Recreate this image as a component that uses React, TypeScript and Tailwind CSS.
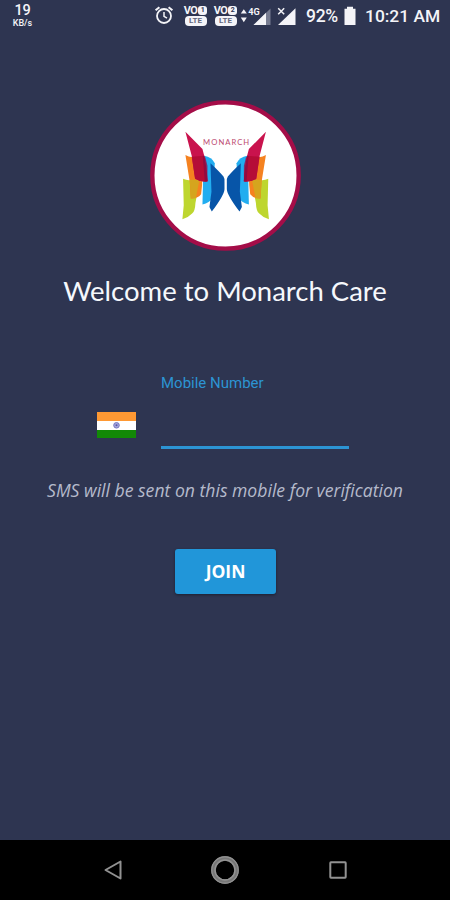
import React from "react";

function AlarmIcon() {
  return (
    <svg viewBox="0 0 20 20" className="h-5 w-5" fill="none" stroke="#f4f4f8" strokeWidth="1.8">
      <circle cx="10" cy="11" r="7" />
      <path d="M10 7v4.4l3 1.8" strokeWidth="1.5" />
      <path d="M1.6 5.3 5.4 2.2M18.4 5.3l-3.8-3.1" strokeWidth="2" />
    </svg>
  );
}

function VolteBadge({ sim }: { sim: string }) {
  return (
    <div className="flex w-[25px] flex-col items-center">
      <div className="flex h-[9px] items-center text-[11px] leading-[9px] font-bold tracking-[-0.6px]">
        VO
        <span className="ml-px flex h-[9px] w-[9px] items-center justify-center rounded-[3px] bg-[#f4f4f8] text-[7px] leading-none tracking-normal text-[#2e3551]">
          {sim}
        </span>
      </div>
      <span className="mt-px flex h-[10px] w-[22px] items-center justify-center rounded-[4px] bg-[#f4f4f8] text-[8px] leading-none font-bold text-[#62677d]">
        LTE
      </span>
    </div>
  );
}

function DataSignal() {
  return (
    <svg viewBox="0 0 32 20" className="h-5 w-8" fill="#f4f4f8">
      <path d="M0.8 7.5 3.8 3.3 6.8 7.5zM0.8 11.5h6L3.8 16.3z" />
      <path d="M13.5 19 30.5 2.5V19z" fill="#777c91" />
      <path d="M13.5 19 26 6.8V19z" />
      <text x="8.3" y="8.6" fontSize="9.5" fontWeight="700" textLength="11.5" lengthAdjust="spacingAndGlyphs">
        4G
      </text>
    </svg>
  );
}

function NoSignal() {
  return (
    <svg viewBox="0 0 19 20" className="h-5 w-[19px]">
      <path d="M1 19 18.5 2.3V19z" fill="#f4f4f8" />
      <path d="m1.2 2.2 6 6M7.2 2.2l-6 6" stroke="#f4f4f8" strokeWidth="1.5" />
    </svg>
  );
}

function StatusBar() {
  return (
    <header className="flex h-8 shrink-0 items-start font-[Roboto,sans-serif] text-[#f4f4f8]">
      <div className="mt-[2px] ml-[9px] flex w-[27px] flex-col items-center font-medium">
        <span className="text-[14.5px] leading-[17px] tracking-[-0.3px]">19</span>
        <span className="text-[9px] leading-[9px]">KB/s</span>
      </div>
      <div className="mt-[5px] ml-[118px]">
        <AlarmIcon />
      </div>
      <div className="mt-[6px] ml-[9px] flex gap-[5px]">
        <VolteBadge sim="1" />
        <VolteBadge sim="2" />
      </div>
      <div className="mt-[6px] ml-[2px]">
        <DataSignal />
      </div>
      <div className="mt-[6px] ml-[5px]">
        <NoSignal />
      </div>
      <span className="mt-[6px] ml-[10px] w-[33px] text-[17.5px] leading-[21px] font-medium tracking-[-0.3px]">92%</span>
      <svg viewBox="0 0 12 19" className="mt-[6px] ml-[5px] h-[19px] w-3" fill="#f4f4f8">
        <path d="M3 0.7h6v2H11.5V19H0.5V2.7h2.5z" />
      </svg>
      <span className="mt-[6px] ml-[9px] text-[17.4px] leading-[21px] font-medium whitespace-nowrap">10:21 AM</span>
    </header>
  );
}

function Wing() {
  return (
    <>
      <path d="M177 182 Q200 186 209 204 L203 308 Q193 322 172 328 L174 250z" fill="#22adf0" />
      <path d="M196 204 Q222 228 235 244 Q239 250 238 260 V282 Q237 300 200 349 L193 335 L199 290z" fill="#0755a8" />
      <path d="M114 251 Q125 256 135 255 L164 254 L151 323 Q150 348 141 355 Q130 367 112 372 L116 330z" fill="#bed62f" />
      <path d="M121 180 Q130 186 142 186 L168 183 Q176 240 168 297 Q158 310 137 310 L134 260z" fill="#f58220" />
      <path d="M134 254 L163 254 L152 309 L137 310z" fill="#d5a51e" />
      <path d="M170 178 L181 188 L187 212 V258 H168z" fill="#713572" />
      <path d="M121 110 L172 162 Q185 205 187 258 Q166 261 150 251 L140 183z" fill="#c9134d" />
      <path d="M140 185 L177 182 L187 258 Q166 261 150 251z" fill="#b50c37" />
      <path d="M177 182 Q185 215 187 258 L179 259 L173 183z" fill="#920b40" />
    </>
  );
}

function MonarchLogo() {
  return (
    <svg viewBox="15 15 452 452" className="h-[151px] w-[151px]">
      <circle cx="241" cy="241" r="219" fill="#fff" stroke="#a40d48" strokeWidth="13" />
      <Wing />
      <g transform="translate(483 0) scale(-1 1)">
        <Wing />
      </g>
      <text
        x="174"
        y="150"
        textLength="138"
        fontSize="23"
        fill="#bc4a70"
        className="font-[Lato,sans-serif]"
      >
        MONARCH
      </text>
    </svg>
  );
}

function IndiaFlag() {
  return (
    <svg viewBox="0 0 39 26" className="h-[26px] w-[39px]">
      <path d="M0 0h39v9H0z" fill="#ff9933" />
      <path d="M0 9h39v9H0z" fill="#fff" />
      <path d="M0 18h39v8H0z" fill="#128807" />
      <circle cx="19.5" cy="13.3" r="2.8" fill="#a8a8dc" stroke="#6f6fbd" strokeWidth="0.9" />
      <circle cx="19.5" cy="13.3" r="1" fill="#5555ac" />
    </svg>
  );
}

function NavBar() {
  return (
    <nav className="flex h-[60px] shrink-0 items-center justify-between bg-black pr-[102px] pl-[103px] text-[#929292]">
      <svg viewBox="0 0 20 22" className="h-[22px] w-5" fill="none" stroke="currentColor" strokeWidth="2">
        <path d="M17.5 2.5v17L2.5 11z" strokeLinejoin="round" />
      </svg>
      <svg viewBox="0 0 30 30" className="-ml-px h-[30px] w-[30px]" fill="none" stroke="currentColor">
        <circle cx="15" cy="15" r="11.6" strokeWidth="4.6" stroke="#777" />
        <circle cx="15" cy="15" r="13.2" strokeWidth="1.2" />
        <circle cx="15" cy="15" r="10" strokeWidth="1.5" />
      </svg>
      <svg viewBox="0 0 20 20" className="h-5 w-5" fill="none" stroke="currentColor" strokeWidth="2">
        <rect x="2.3" y="2.3" width="15.4" height="15.4" rx="0.6" />
      </svg>
    </nav>
  );
}

export default function App() {
  return (
    <div className="flex h-[900px] w-[450px] flex-col overflow-hidden bg-[#2e3551]">
      <StatusBar />
      <main className="flex flex-1 flex-col items-center pt-[68px]">
        <MonarchLogo />
        <h1 className="mt-[22px] font-[Lato,sans-serif] text-[27.5px] leading-9 whitespace-nowrap text-[#f5f8fc]">
          Welcome to Monarch Care
        </h1>
        <div className="mt-[64px] flex w-full pl-[97px]">
          <div className="mt-[39px]">
            <IndiaFlag />
          </div>
          <label className="ml-[25px] flex h-[76px] w-[188px] flex-col border-b-[3px] border-[#2c94d3] font-[Roboto,sans-serif] text-[15px] leading-5 text-[#2c94d3]">
            Mobile Number
            <input type="tel" className="w-full flex-1 bg-transparent text-white outline-none" />
          </label>
        </div>
        <p className="mt-[29px] font-['Open_Sans',sans-serif] text-[17.6px] leading-6 whitespace-nowrap text-[#b5bacb] italic">
          SMS will be sent on this mobile for verification
        </p>
        <button className="mt-[47px] ml-px h-[45px] w-[101px] rounded-[3px] bg-[#2196d9] font-['Open_Sans',sans-serif] text-[17.5px] font-bold text-white shadow-[0_1px_3px_rgba(0,0,0,0.4)]">
          JOIN
        </button>
      </main>
      <NavBar />
    </div>
  );
}
